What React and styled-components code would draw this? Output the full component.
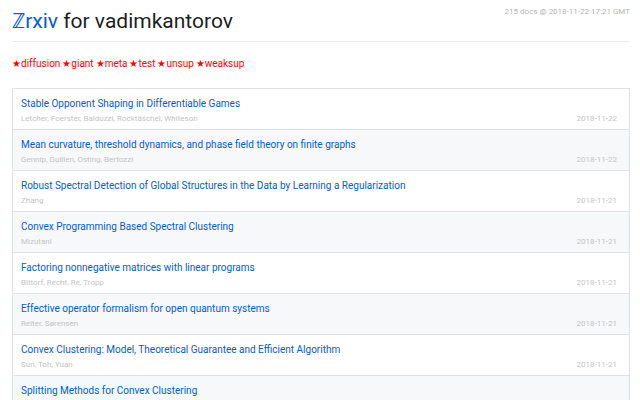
import React from "react";
import styled, { createGlobalStyle } from "styled-components";

const GlobalStyle = createGlobalStyle`
  * { box-sizing: border-box; }
  html { overflow: hidden; }
  body { margin: 0; background: #fff; color: #1b1f23; font-family: Roboto, "Noto Sans", sans-serif; }
`;
const Page = styled.main`
  padding: 4px 10px 0 12px;
`;
const Header = styled.header`
  display: flex;
  justify-content: space-between;
  align-items: flex-start;
  height: 38px;
  border-bottom: 1px solid #eaecef;
`;
const Title = styled.h1`
  margin: 0;
  font-size: 21px;
  line-height: 34px;
  font-weight: 400;
`;
const Link = styled.a`
  color: #035cd2;
  text-decoration: none;
`;
const Stamp = styled.span`
  font-size: 8px;
  line-height: 16px;
  font-weight: 400;
  color: #b4b4b4;
`;
const Tags = styled.nav`
  display: flex;
  gap: 2px;
  padding: 13px 0 15px;
  font-size: 10px;
  line-height: 18px;
`;
const Tag = styled.a`
  color: #f00;
  text-decoration: none;
`;
const List = styled.ul`
  margin: 0;
  padding: 0;
  list-style: none;
  border: 1px solid #dfe2e5;
`;
const Doc = styled.li`
  padding: 6px 12px 4px 8px;
  border-bottom: 1px solid #dfe2e5;
  font-size: 10px;
  line-height: 18px;
  &:nth-child(even) { background: #f6f8fa; }
`;
const Meta = styled.div`
  display: flex;
  justify-content: space-between;
  font-size: 8px;
  line-height: 12px;
  color: #c4c4c4;
`;

const tags = ["diffusion", "giant", "meta", "test", "unsup", "weaksup"];
const docs = [
  ["Stable Opponent Shaping in Differentiable Games", "Letcher, Foerster, Balduzzi, Rocktäschel, Whiteson", "2018-11-22"],
  ["Mean curvature, threshold dynamics, and phase field theory on finite graphs", "Gennip, Guillen, Osting, Bertozzi", "2018-11-22"],
  ["Robust Spectral Detection of Global Structures in the Data by Learning a Regularization", "Zhang", "2018-11-21"],
  ["Convex Programming Based Spectral Clustering", "Mizutani", "2018-11-21"],
  ["Factoring nonnegative matrices with linear programs", "Bittorf, Recht, Re, Tropp", "2018-11-21"],
  ["Effective operator formalism for open quantum systems", "Reiter, Sørensen", "2018-11-21"],
  ["Convex Clustering: Model, Theoretical Guarantee and Efficient Algorithm", "Sun, Toh, Yuan", "2018-11-21"],
  ["Splitting Methods for Convex Clustering", "", ""],
];

export default function App() {
  return (
    <Page>
      <GlobalStyle />
      <Header>
        <Title><Link href="#">ℤrxiv</Link> for vadimkantorov</Title>
        <Stamp>215 docs @ 2018-11-22 17:21 GMT</Stamp>
      </Header>
      <Tags>
        {tags.map((t) => <Tag key={t} href={`#${t}`}>★{t}</Tag>)}
      </Tags>
      <List>
        {docs.map(([title, authors, date]) => (
          <Doc key={title}>
            <Link href="#">{title}</Link>
            <Meta><span>{authors}</span><time>{date}</time></Meta>
          </Doc>
        ))}
      </List>
    </Page>
  );
}
